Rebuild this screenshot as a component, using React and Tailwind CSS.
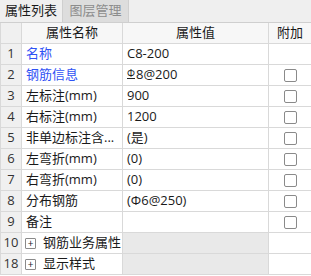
import React from 'react';

const rows = [
  { n: '1', name: '名称', value: 'C8-200', blue: true },
  { n: '2', name: '钢筋信息', value: 'rebar', blue: true, check: true },
  { n: '3', name: '左标注(mm)', value: '900', check: true },
  { n: '4', name: '右标注(mm)', value: '1200', check: true },
  { n: '5', name: '非单边标注含...', value: '(是)', check: true },
  { n: '6', name: '左弯折(mm)', value: '(0)', check: true },
  { n: '7', name: '右弯折(mm)', value: '(0)', check: true },
  { n: '8', name: '分布钢筋', value: 'dist', check: true },
  { n: '9', name: '备注', value: '', check: true },
];

const groups = [
  { n: '10', name: '钢筋业务属性' },
  { n: '18', name: '显示样式' },
];

const font = { fontFamily: '"Open Sans", "Noto Sans CJK SC", sans-serif' };

const Checkbox = () => (
  <span className="block w-[13px] h-[13px] rounded-[2px] border border-[#8a8a8a] bg-white" />
);

const renderValue = (v) => {
  if (v === 'rebar')
    return (
      <>
        <span className="inline-block text-[10px] leading-[10px] border-b border-[#222] -translate-y-[2px] mr-[1px]">Φ</span>8@200
      </>
    );
  if (v === 'dist') return '(Φ6@250)';
  return v;
};

export default function App() {
  return (
    <div className="w-[311px] h-[276px] bg-white text-[13px] text-[#1a1a1a] overflow-hidden" style={font}>
      <div className="flex h-[23px] bg-[#efefef] border-b border-[#cfcfcf]">
        <div className="w-[63px] flex items-center justify-center border-r border-[#cfcfcf]">属性列表</div>
        <div className="w-[66px] flex items-center justify-center bg-[#dddddd] text-[#8c8c8c] border-r border-[#cfcfcf]">图层管理</div>
      </div>

      <div className="border-l border-[#d9d9d9]">
        <div className="flex h-[21px] border-b border-[#d9d9d9] bg-[#f7f7f7]">
          <div className="w-[21px] border-r border-[#d9d9d9] bg-[#f0f0f0]" />
          <div className="w-[101px] border-r border-[#d9d9d9] flex items-center justify-center">属性名称</div>
          <div className="w-[146px] border-r border-[#d9d9d9] flex items-center justify-center">属性值</div>
          <div className="flex-1 flex items-center justify-center">附加</div>
        </div>

        {rows.map((r) => (
          <div key={r.n} className="flex h-[21px] border-b border-[#d9d9d9]">
            <div className="w-[21px] border-r border-[#d9d9d9] bg-[#f0f0f0] flex items-center justify-center text-[#333]">{r.n}</div>
            <div className={`w-[101px] border-r border-[#d9d9d9] flex items-center pl-[4px] whitespace-nowrap ${r.blue ? 'text-[#2f52f5]' : ''}`}>{r.name}</div>
            <div className="w-[146px] border-r border-[#d9d9d9] flex items-center pl-[4px] whitespace-nowrap">{renderValue(r.value)}</div>
            <div className="flex-1 flex items-center justify-center">{r.check && <Checkbox />}</div>
          </div>
        ))}

        {groups.map((g) => (
          <div key={g.n} className="flex h-[21px] border-b border-[#d9d9d9]">
            <div className="w-[21px] border-r border-[#d9d9d9] bg-[#f0f0f0] flex items-center justify-center text-[#333]">{g.n}</div>
            <div className="w-[101px] border-r border-[#d9d9d9] flex items-center pl-[3px] whitespace-nowrap">
              <span className="w-[11px] h-[11px] border border-[#8a8a8a] rounded-[1px] flex items-center justify-center text-[10px] leading-none mr-[7px]">+</span>
              {g.name}
            </div>
            <div className="w-[146px] border-r border-[#d9d9d9] bg-[#e9e9e9]" />
            <div className="flex-1" />
          </div>
        ))}
      </div>
    </div>
  );
}
